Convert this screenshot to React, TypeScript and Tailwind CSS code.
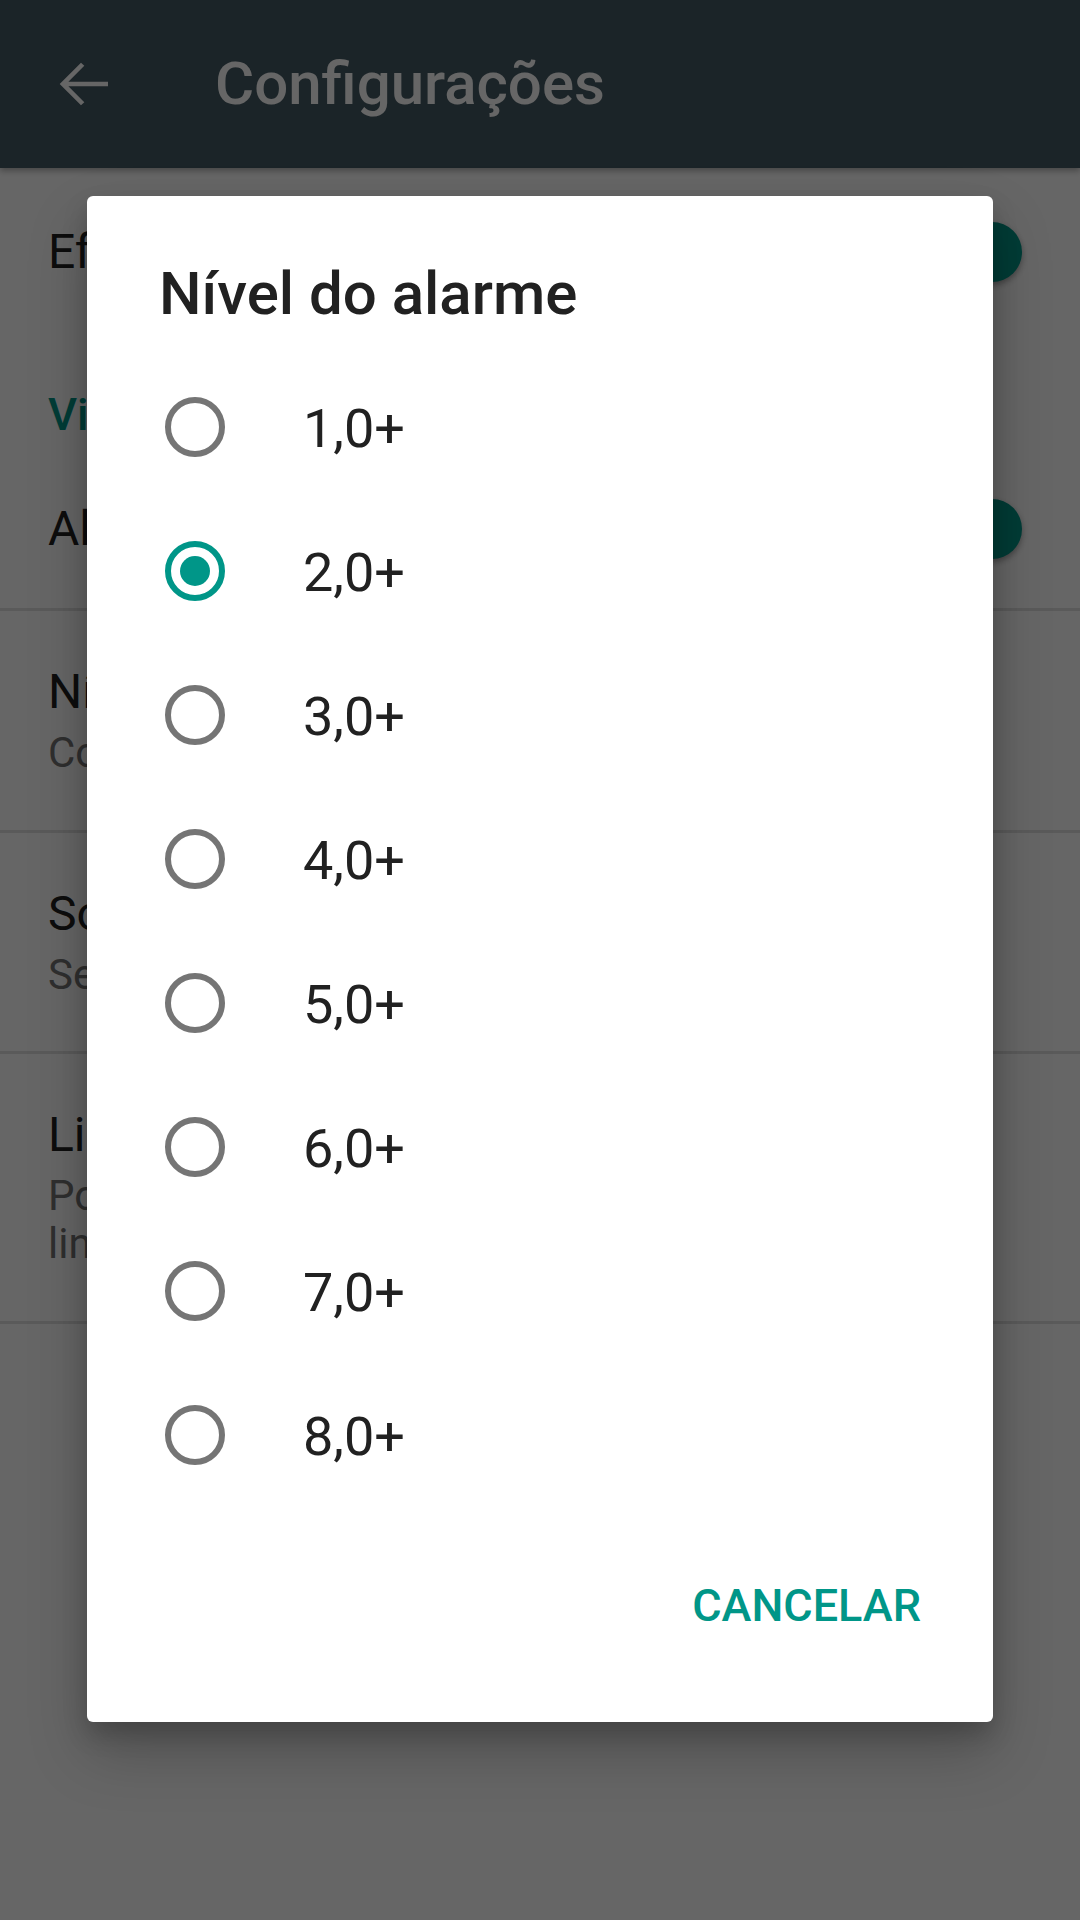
import React from 'react';

const levels = ['1,0+', '2,0+', '3,0+', '4,0+', '5,0+', '6,0+', '7,0+', '8,0+'];

const Toggle: React.FC = () => (
  <div className="relative w-[102px] h-[60px] shrink-0">
    <div className="absolute left-0 top-[9px] w-[92px] h-[42px] rounded-full bg-[#80cbc4]" />
    <div className="absolute right-0 top-0 w-[60px] h-[60px] rounded-full bg-[#009688] shadow-[0_3px_6px_rgba(0,0,0,0.35)]" />
  </div>
);

const Radio: React.FC<{ checked: boolean }> = ({ checked }) => (
  <div
    className={`w-[60px] h-[60px] rounded-full border-[6px] flex items-center justify-center shrink-0 ${
      checked ? 'border-[#009688]' : 'border-[#757575]'
    }`}
  >
    {checked && <div className="w-[30px] h-[30px] rounded-full bg-[#009688]" />}
  </div>
);

export default function App() {
  const selected = '2,0+';

  return (
    <div className="relative w-[1080px] h-[1920px] overflow-hidden bg-white font-['Roboto',sans-serif]">
      {/* settings screen underneath */}
      <div className="flex flex-col">
        <div className="h-[168px] bg-[#455a64] flex items-center shadow-[0_3px_6px_rgba(0,0,0,0.3)] relative z-10">
          <div className="ml-[48px] w-[72px] h-[72px] flex items-center justify-center">
            <svg width="72" height="72" viewBox="0 0 24 24" fill="#ffffff">
              <path d="M20 11.25H6.8l5.3-5.3L11 4.9 3.9 12l7.1 7.1 1.1-1.05-5.3-5.3H20z" />
            </svg>
          </div>
          <span className="ml-[95px] text-[60px] leading-none font-medium text-white">Configurações</span>
        </div>

        <div className="h-[168px] flex items-center justify-between pl-[48px] pr-[58px]">
          <span className="text-[48px] leading-none text-[#212121]">Efeitos</span>
          <Toggle />
        </div>

        <div className="h-[114px] pt-[56px] pl-[48px]">
          <span className="block text-[45px] leading-[45px] font-medium text-[#009688]">Vibração</span>
        </div>

        <div className="h-[161px] flex items-center justify-between pl-[48px] pr-[58px] border-b-[3px] border-[#e0e0e0]">
          <span className="text-[48px] leading-none text-[#212121]">Alarme</span>
          <Toggle />
        </div>

        <div className="h-[222px] flex flex-col justify-center pl-[48px] border-b-[3px] border-[#e0e0e0]">
          <span className="text-[48px] leading-[56px] text-[#212121]">Nível</span>
          <span className="mt-[9px] text-[42px] leading-[48px] text-[#757575]">Configurar</span>
        </div>

        <div className="h-[221px] flex flex-col justify-center pl-[48px] border-b-[3px] border-[#e0e0e0]">
          <span className="text-[48px] leading-[56px] text-[#212121]">Som</span>
          <span className="mt-[9px] text-[42px] leading-[48px] text-[#757575]">Selecionar</span>
        </div>

        <div className="h-[270px] flex flex-col justify-center pl-[48px] border-b-[3px] border-[#e0e0e0]">
          <span className="text-[48px] leading-[56px] text-[#212121]">Limite</span>
          <span className="mt-[9px] text-[42px] leading-[48px] text-[#757575] whitespace-nowrap">Por região</span>
          <span className="text-[42px] leading-[48px] text-[#757575] whitespace-nowrap">linha</span>
        </div>
      </div>

      {/* scrim */}
      <div className="absolute inset-0 z-20 bg-black/60" />

      {/* dialog */}
      <div className="absolute z-30 left-[87px] top-[196px] w-[906px] h-[1526px] bg-white rounded-[6px] shadow-[0_30px_60px_rgba(0,0,0,0.22),0_12px_24px_rgba(0,0,0,0.18)] flex flex-col">
        <div className="pt-[62px] pl-[72px]">
          <h2 className="text-[60px] leading-[72px] font-medium text-[#212121]">Nível do alarme</h2>
        </div>

        <ul className="mt-[25px] flex flex-col">
          {levels.map((lvl) => (
            <li key={lvl} className="h-[144px] flex items-center pl-[78px]">
              <Radio checked={lvl === selected} />
              <span className="ml-[78px] pt-[4px] text-[54px] leading-none text-[#212121]">{lvl}</span>
            </li>
          ))}
        </ul>

        <div className="mt-[44px] flex justify-end pr-[48px]">
          <button className="h-[108px] px-[24px] text-[45px] leading-none font-medium text-[#009688] uppercase">
            Cancelar
          </button>
        </div>
      </div>
    </div>
  );
}
